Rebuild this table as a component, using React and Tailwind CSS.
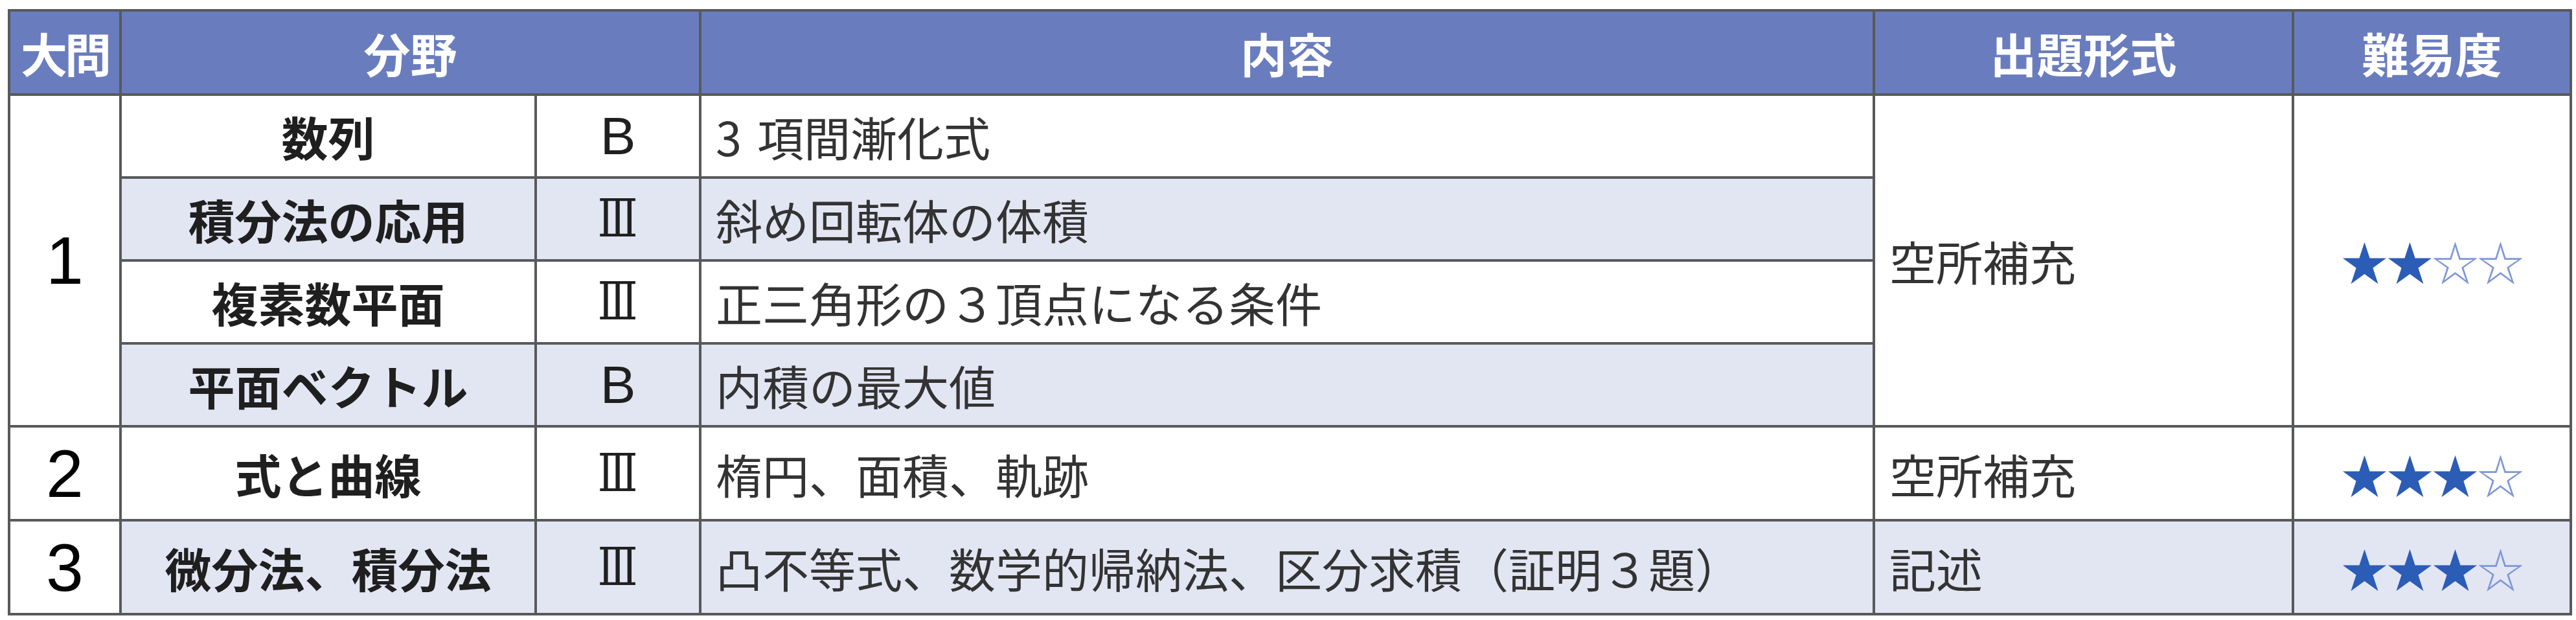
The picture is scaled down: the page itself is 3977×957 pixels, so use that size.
const rows = [
  { no: "1", name: "数列", level: "B", content: <><span className="mr-[24px]">3</span>項間漸化式</>, bg: "bg-white" },
  { name: "積分法の応用", level: "Ⅲ", content: "斜め回転体の体積", bg: "bg-[#e2e6f3]" },
  { name: "複素数平面", level: "Ⅲ", content: "正三角形の３頂点になる条件", bg: "bg-white" },
  { name: "平面ベクトル", level: "B", content: "内積の最大値", bg: "bg-[#e2e6f3]" },
];

const Stars = ({ n }) => (
  <span className="tracking-[-2px]">
    <span className="text-[#2b5cb6]">{"★".repeat(n)}</span>
    <span className="text-[#7e97d6]">{"☆".repeat(4 - n)}</span>
  </span>
);

const Level = ({ v }) =>
  v === "B" ? (
    <span className="font-['Liberation_Sans',sans-serif] text-[82px] leading-none">B</span>
  ) : (
    <span className="inline-block scale-x-[0.8] font-['DejaVu_Serif',serif] text-[80px] leading-none">Ⅲ</span>
  );

const cell = "border-4 border-[#58595b]";

export default function App() {
  return (
    <div className="bg-white w-[3977px] h-[957px] pt-[14px] pl-[12px] font-['Noto_Sans_CJK_JP',sans-serif]">
      <table className="border-collapse table-fixed w-[3955px] text-[72px] leading-none">
        <colgroup>
          <col className="w-[172px]" />
          <col className="w-[641px]" />
          <col className="w-[254px]" />
          <col className="w-[1812px]" />
          <col className="w-[647px]" />
          <col className="w-[429px]" />
        </colgroup>
        <thead>
          <tr className="h-[130px] bg-[#697dbe] text-white font-bold">
            <th className={`${cell} tracking-[-4px]`}>大問</th>
            <th className={cell} colSpan={2}>分野</th>
            <th className={cell}>内容</th>
            <th className={cell}>出題形式</th>
            <th className={cell}>難易度</th>
          </tr>
        </thead>
        <tbody className="text-[#2a2a2a]">
          {rows.map((r, i) => (
            <tr key={i} className="h-[128px]">
              {i === 0 && (
                <td rowSpan={4} className={`${cell} bg-white text-center font-['Liberation_Sans',sans-serif] text-[104px] text-black`}>1</td>
              )}
              <td className={`${cell} ${r.bg} text-center font-bold text-[#1f1f1f]`}>{r.name}</td>
              <td className={`${cell} ${r.bg} text-center text-[#1f1f1f]`}><Level v={r.level} /></td>
              <td className={`${cell} ${r.bg} pl-[22px] text-[#333]`}>{r.content}</td>
              {i === 0 && (
                <>
                  <td rowSpan={4} className={`${cell} bg-white pl-[22px] text-[#333]`}>空所補充</td>
                  <td rowSpan={4} className={`${cell} bg-white text-center`}><Stars n={2} /></td>
                </>
              )}
            </tr>
          ))}
          <tr className="h-[145px]">
            <td className={`${cell} bg-white text-center font-['Liberation_Sans',sans-serif] text-[104px] text-black`}>2</td>
            <td className={`${cell} bg-white text-center font-bold text-[#1f1f1f]`}>式と曲線</td>
            <td className={`${cell} bg-white text-center text-[#1f1f1f]`}><Level v="Ⅲ" /></td>
            <td className={`${cell} bg-white pl-[22px] text-[#333]`}>楕円、面積、軌跡</td>
            <td className={`${cell} bg-white pl-[22px] text-[#333]`}>空所補充</td>
            <td className={`${cell} bg-white text-center`}><Stars n={3} /></td>
          </tr>
          <tr className="h-[145px]">
            <td className={`${cell} bg-white text-center font-['Liberation_Sans',sans-serif] text-[104px] text-black`}>3</td>
            <td className={`${cell} bg-[#e2e6f3] text-center font-bold text-[#1f1f1f]`}>微分法、積分法</td>
            <td className={`${cell} bg-[#e2e6f3] text-center text-[#1f1f1f]`}><Level v="Ⅲ" /></td>
            <td className={`${cell} bg-[#e2e6f3] pl-[22px] text-[#333]`}>凸不等式、数学的帰納法、区分求積（証明３題）</td>
            <td className={`${cell} bg-[#e2e6f3] pl-[22px] text-[#333]`}>記述</td>
            <td className={`${cell} bg-[#e2e6f3] text-center`}><Stars n={3} /></td>
          </tr>
        </tbody>
      </table>
    </div>
  );
}
